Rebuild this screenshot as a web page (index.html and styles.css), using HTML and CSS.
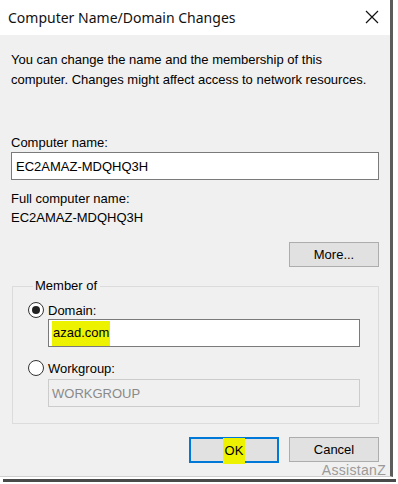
FILE: index.html
```html
<!DOCTYPE html>
<html lang="en">
<head>
  <meta charset="UTF-8">
  <title>Computer Name/Domain Changes</title>
  <link rel="stylesheet" href="styles.css">
</head>
<body>
  <div class="window">
    <div class="titlebar">
      <span class="title">Computer Name/Domain Changes</span>
      <svg class="close" width="14" height="14" viewBox="0 0 14 14">
        <path d="M1 1 L13 13 M13 1 L1 13" stroke="#111" stroke-width="1.2" fill="none"/>
      </svg>
    </div>

    <div class="content">
      <p class="intro">You can change the name and the membership of this computer. Changes might affect access to network resources.</p>

      <label class="field-label">Computer name:</label>
      <div class="textbox">EC2AMAZ-MDQHQ3H</div>

      <div class="field-label full-label">Full computer name:</div>
      <div class="full-value">EC2AMAZ-MDQHQ3H</div>

      <div class="more-row">
        <button class="btn">More...</button>
      </div>

      <fieldset class="group">
        <legend>Member of</legend>
        <div class="radio-row">
          <span class="radio checked"></span>
          <span>Domain:</span>
        </div>
        <div class="textbox inner"><span class="marker">azad.com</span></div>
        <div class="radio-row workgroup-row">
          <span class="radio"></span>
          <span>Workgroup:</span>
        </div>
        <div class="textbox inner disabled">WORKGROUP</div>
      </fieldset>

      <div class="actions">
        <button class="btn default"><span class="marker ok">OK</span></button>
        <button class="btn">Cancel</button>
      </div>
    </div>
    <div class="watermark">AssistanZ</div>
  </div>
  <div class="shadow"></div>
</body>
</html>
```

FILE: styles.css
```css
* {
  margin: 0;
  padding: 0;
  box-sizing: border-box;
}

body {
  width: 398px;
  height: 484px;
  background: #fff;
  font-family: 'Liberation Sans', Arial, sans-serif;
  font-size: 13px;
  color: #000;
  overflow: hidden;
}

.window {
  position: relative;
  width: 393px;
  height: 477px;
  border-right: 3px solid #5c5c5c;
  border-bottom: 1px solid #cfcfcf;
  background: #f0f0f0;
}

.titlebar {
  height: 35px;
  background: #fff;
  display: flex;
  align-items: center;
  justify-content: space-between;
  padding: 0 11px 0 8px;
}

.title {
  font-family: 'Noto Sans', 'Open Sans', sans-serif;
  font-size: 14px;
  color: #111;
  margin-top: -1px;
}

.close {
  margin-top: -2px;
}

.content {
  padding: 15px 11px 0 11px;
}

.intro {
  line-height: 20px;
  padding-right: 10px;
}

.field-label {
  display: block;
  margin-top: 45px;
  line-height: 16px;
}

.textbox {
  height: 28px;
  margin-top: 1px;
  border: 1px solid #7a7a7a;
  background: #fff;
  padding: 0 4px;
  display: flex;
  align-items: center;
  width: 368px;
}

.full-label {
  margin-top: 11px;
}

.full-value {
  line-height: 18px;
  margin-top: 2px;
}

.more-row {
  display: flex;
  justify-content: flex-end;
  margin-top: 15px;
  width: 368px;
}

.btn {
  width: 90px;
  height: 25px;
  border: 1px solid #adadad;
  background: #e1e1e1;
  font-family: 'Liberation Sans', Arial, sans-serif;
  font-size: 13px;
  color: #000;
}

.group {
  margin: 12px 0 0 1px;
  width: 367px;
  height: 145px;
  border: 1px solid #dcdcdc;
  padding: 0 0 0 15px;
}

.group legend {
  margin-left: 5px;
  padding: 0 3px 0 2px;
  line-height: 14px;
}

.radio-row {
  display: flex;
  align-items: center;
  gap: 4px;
  height: 16px;
  margin-top: 9px;
}

.radio {
  width: 16px;
  height: 16px;
  border: 1.5px solid #333;
  border-radius: 50%;
  background: #fff;
  display: flex;
  align-items: center;
  justify-content: center;
}

.radio.checked::after {
  content: '';
  width: 8px;
  height: 8px;
  border-radius: 50%;
  background: #222;
}

.textbox.inner {
  width: 312px;
  margin: 1px 0 0 20px;
  padding: 0 3px;
}

.workgroup-row {
  margin-top: 13px;
}

.textbox.disabled {
  margin-top: 3px;
  border-color: #cccccc;
  background: #f0f0f0;
  color: #8a8a8a;
}

.marker {
  background: #edf200;
  padding: 4px 1px 6px 1px;
}

.actions {
  display: flex;
  justify-content: flex-end;
  gap: 10px;
  margin-top: 13px;
  width: 368px;
}

.btn.default {
  border: 2px solid #0078d7;
  height: 26px;
}

.marker.ok {
  padding: 5px 2px 6px 2px;
}

.watermark {
  position: absolute;
  right: 4px;
  bottom: -2px;
  font-size: 14px;
  color: #9a9a9a;
  letter-spacing: 0.3px;
}

.shadow {
  margin: 2px 0 0 3px;
  width: 393px;
  height: 3px;
  background: #4a4a4a;
}
```
